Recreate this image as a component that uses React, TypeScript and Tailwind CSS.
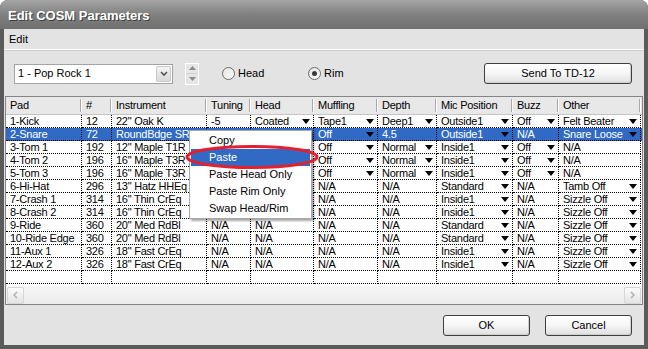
const cols = [
  { name: "Pad", w: 76 },
  { name: "#", w: 30 },
  { name: "Instrument", w: 95 },
  { name: "Tuning", w: 44 },
  { name: "Head", w: 63 },
  { name: "Muffling", w: 64 },
  { name: "Depth", w: 59 },
  { name: "Mic Position", w: 76 },
  { name: "Buzz", w: 46 },
  { name: "Other", w: 82 },
]

// a trailing "*" means the cell shows a drop-down arrow; "" cells sit under the context menu
const rows = [
  ["1-Kick", "12", '22" Oak K', "-5", "Coated*", "Tape1*", "Deep1*", "Outside1*", "Off*", "Felt Beater*"],
  ["2-Snare", "72", "RoundBdge SR", "", "", "Off*", "4.5", "Outside1*", "N/A", "Snare Loose*"],
  ["3-Tom 1", "192", '12" Maple T1R', "", "", "Off*", "Normal*", "Inside1*", "Off*", "N/A"],
  ["4-Tom 2", "196", '16" Maple T3R', "", "", "Off*", "Normal*", "Inside1*", "Off*", "N/A"],
  ["5-Tom 3", "196", '16" Maple T3R', "", "", "Off*", "Normal*", "Inside1*", "Off*", "N/A"],
  ["6-Hi-Hat", "296", '13" Hatz HHEq', "", "", "N/A", "N/A", "Standard*", "N/A", "Tamb Off*"],
  ["7-Crash 1", "314", '16" Thin CrEq', "", "", "N/A", "N/A", "Inside1*", "N/A", "Sizzle Off*"],
  ["8-Crash 2", "314", '16" Thin CrEq', "", "", "N/A", "N/A", "Inside1*", "N/A", "Sizzle Off*"],
  ["9-Ride", "360", '20" Med RdBl', "N/A", "N/A", "N/A", "N/A", "Standard*", "N/A", "Sizzle Off*"],
  ["10-Ride Edge", "360", '20" Med RdBl', "N/A", "N/A", "N/A", "N/A", "Standard*", "N/A", "Sizzle Off*"],
  ["11-Aux 1", "326", '18" Fast CrEq', "N/A", "N/A", "N/A", "N/A", "Inside1*", "N/A", "Sizzle Off*"],
  ["12-Aux 2", "326", '18" Fast CrEq', "N/A", "N/A", "N/A", "N/A", "Inside1*", "N/A", "Sizzle Off*"],
]

function Arrow() {
  return (
    <svg width="8" height="5" viewBox="0 0 8 5" className="shrink-0">
      <polygon points="0,0 8,0 4,5" fill="#000" />
    </svg>
  )
}

function XpButton({ label, w }: { label: string; w: number }) {
  return (
    <div
      className="h-[21px] rounded-[3px] border border-[#3f3f3f] bg-gradient-to-b from-white via-[#f6f6f6] to-[#dedede] flex items-center justify-center shadow-[inset_-1px_-1px_0_#cfcfcf]"
      style={{ width: w }}
    >
      {label}
    </div>
  )
}

function Radio({ label, checked }: { label: string; checked?: boolean }) {
  return (
    <div className="flex items-center gap-[3px]">
      <div className="w-[13px] h-[13px] rounded-full border border-[#6b6b6b] bg-gradient-to-br from-[#e4e4e4] to-white flex items-center justify-center">
        {checked && <div className="w-[5px] h-[5px] rounded-full bg-[#3a3a3a]" />}
      </div>
      <span>{label}</span>
    </div>
  )
}

export default function App() {
  return (
    <div className="relative w-[648px] h-[349px] bg-[#5b5b5b] rounded-t-[8px] overflow-hidden flex flex-col font-['Liberation_Sans',Arial,sans-serif] text-[11px] text-black">
      {/* Title bar */}
      <div className="h-[29px] shrink-0 bg-gradient-to-b from-[#a5a5a5] via-[#808080] to-[#707070] flex items-center pl-[8px] pt-[2px] text-white font-bold text-[13px] [text-shadow:1px_1px_0_#404040]">
        Edit COSM Parameters
      </div>

      <div className="mx-[4px] h-[316px] bg-[#e3e3e3] flex flex-col">
        {/* Menu bar */}
        <div className="h-[21px] shrink-0 flex items-center pl-[5px] border-b border-white shadow-[0_1px_0_#cfcfcf]">
          Edit
        </div>

        {/* Toolbar */}
        <div className="h-[46px] shrink-0 flex items-center pl-[10px] pr-[12px] pt-[1px]">
          <div className="w-[159px] h-[20px] border border-[#a4a4a4] bg-white flex items-center pl-[3px] pr-[1px]">
            <span className="flex-1">1 - Pop Rock 1</span>
            <div className="w-[15px] h-[16px] rounded-[2px] border border-[#c9c9c9] bg-gradient-to-b from-[#f4f4f4] to-[#d9d9d9] flex items-center justify-center">
              <svg width="8" height="6" viewBox="0 0 8 6">
                <polyline points="1,1 4,4 7,1" fill="none" stroke="#555" strokeWidth="1.6" />
              </svg>
            </div>
          </div>
          <div className="ml-[12px] w-[14px] h-[22px] border border-white bg-[#e6e6e6] flex flex-col">
            <div className="flex-1 flex items-center justify-center border-b border-[#d2d2d2]">
              <svg width="7" height="4" viewBox="0 0 7 4">
                <polygon points="0,4 7,4 3.5,0" fill="#8a8a8a" />
              </svg>
            </div>
            <div className="flex-1 flex items-center justify-center">
              <svg width="7" height="4" viewBox="0 0 7 4">
                <polygon points="0,0 7,0 3.5,4" fill="#8a8a8a" />
              </svg>
            </div>
          </div>
          <div className="ml-[23px] w-[86px]">
            <Radio label="Head" />
          </div>
          <Radio label="Rim" checked />
          <div className="ml-auto">
            <XpButton label="Send To TD-12" w={148} />
          </div>
        </div>

        {/* Grid */}
        <div className="mx-[1px] h-[209px] shrink-0 border border-[#858585] bg-white flex flex-col tracking-[-0.25px]">
          <div className="h-[18px] shrink-0 flex bg-[#e8e8e8] border-b border-[#c4c4c4]">
            {cols.map((c) => (
              <div key={c.name} className="shrink-0 flex items-center justify-between" style={{ width: c.w }}>
                <span className="pl-[4px]">{c.name}</span>
                <div className="h-[13px] w-[2px] border-l border-[#a9a9a9] border-r border-r-white" />
              </div>
            ))}
          </div>

          {rows.map((r, i) => {
            const sel = i === 1
            return (
              <div key={i} className={`h-[13px] shrink-0 flex pt-[1px] ${sel ? "bg-[#316ac5] text-white" : ""}`}>
                {r.map((v, j) => {
                  const arrow = v.endsWith("*")
                  return (
                    <div
                      key={j}
                      className="shrink-0 h-[13px] -mt-[1px] flex items-center pl-[4px] pr-[3px] border-r border-b border-dotted border-black leading-[12px] overflow-hidden whitespace-nowrap"
                      style={{ width: cols[j].w }}
                    >
                      <span className="flex-1">{arrow ? v.slice(0, -1) : v}</span>
                      {arrow && <Arrow />}
                    </div>
                  )
                })}
              </div>
            )
          })}
          <div className="h-[13px] shrink-0 flex">
            {cols.map((c) => (
              <div key={c.name} className="shrink-0 h-[13px] border-r border-b border-dotted border-black" style={{ width: c.w }} />
            ))}
          </div>

          {/* Horizontal scrollbar */}
          <div className="mt-auto h-[18px] shrink-0 flex items-center bg-gradient-to-b from-[#f6f6f6] to-[#ececec] px-[1px]">
            <div className="w-[17px] h-[17px] rounded-[2px] border border-[#d6d6d6] bg-gradient-to-b from-[#fbfbfb] to-[#e4e4e4] flex items-center justify-center">
              <svg width="5" height="8" viewBox="0 0 5 8">
                <polyline points="4,1 1,4 4,7" fill="none" stroke="#b0b0b0" strokeWidth="1.5" />
              </svg>
            </div>
            <div className="flex-1" />
            <div className="w-[17px] h-[17px] rounded-[2px] border border-[#d6d6d6] bg-gradient-to-b from-[#fbfbfb] to-[#e4e4e4] flex items-center justify-center">
              <svg width="5" height="8" viewBox="0 0 5 8">
                <polyline points="1,1 4,4 1,7" fill="none" stroke="#b0b0b0" strokeWidth="1.5" />
              </svg>
            </div>
          </div>
        </div>

        {/* Footer */}
        <div className="flex-1 flex items-center justify-end gap-[15px] pr-[12px] pt-[1px]">
          <XpButton label="OK" w={87} />
          <XpButton label="Cancel" w={87} />
        </div>
      </div>

      {/* Context menu */}
      <div className="absolute left-[189px] top-[130px] w-[123px] border border-[#a8a8a8] bg-white py-[1px] shadow-[2px_2px_2px_rgba(0,0,0,0.35)]">
        {["Copy", "Paste", "Paste Head Only", "Paste Rim Only", "Swap Head/Rim"].map((m) => (
          <div
            key={m}
            className={`h-[17px] mx-[1px] flex items-center pl-[18px] ${m === "Paste" ? "bg-[#316ac5] text-white" : ""}`}
          >
            {m}
          </div>
        ))}
      </div>

      {/* Red highlight ring */}
      <svg className="absolute left-[184px] top-[144px]" width="136" height="26" viewBox="0 0 136 26">
        <ellipse cx="68" cy="13" rx="65" ry="10.5" fill="none" stroke="#e3202f" strokeWidth="3" />
      </svg>
    </div>
  )
}
